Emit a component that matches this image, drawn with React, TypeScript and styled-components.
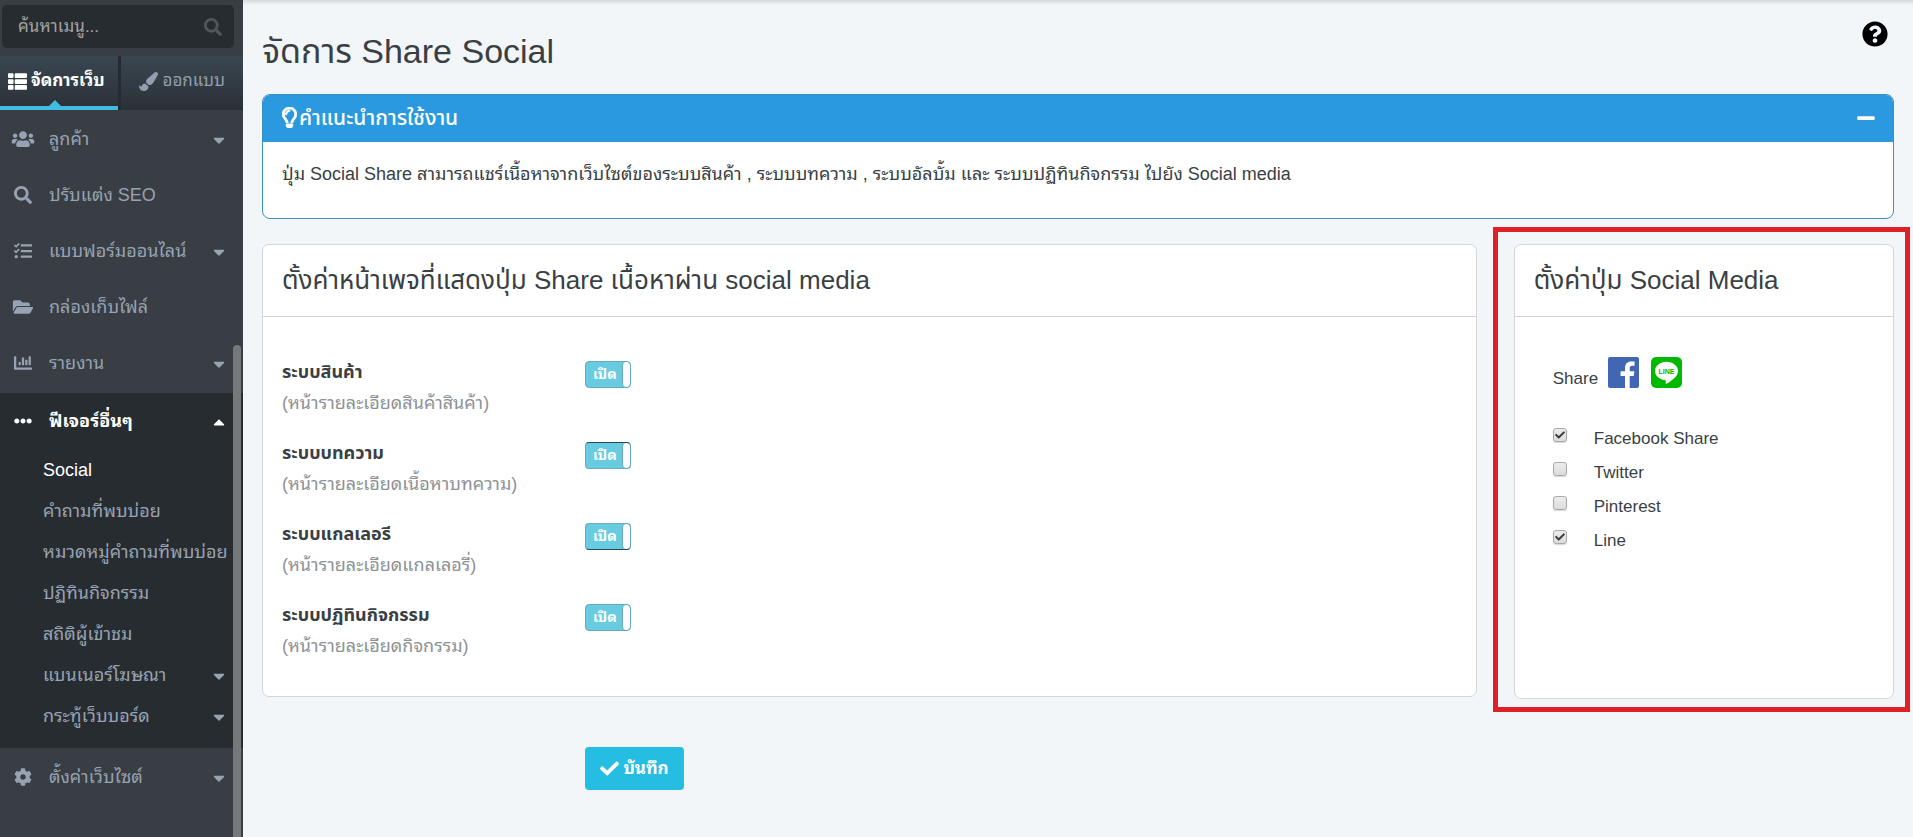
import React, { useState } from 'react';
import styled, { createGlobalStyle } from 'styled-components';
import {
  FaCaretDown,
  FaCaretUp,
  FaChartBar,
  FaCheck,
  FaCog,
  FaEllipsisH,
  FaFolderOpen,
  FaMinus,
  FaPaintBrush,
  FaQuestionCircle,
  FaRegLightbulb,
  FaSearch,
  FaTasks,
  FaThList,
  FaUsers,
} from 'react-icons/fa';

const headingFont = '"Liberation Sans", Arial, "Noto Sans Thai", "Noto Sans", sans-serif';

const GlobalStyle = createGlobalStyle`
  *, *::before, *::after { box-sizing: border-box; }
  html, body, #root { height: 100%; }
  body {
    margin: 0;
    background: #f2f6f9;
    color: #3a3f44;
    font: 17px/24px "Liberation Sans", Arial, "Noto Sans Thai Looped", "Noto Looped Thai", Loma, Waree, Garuda, "Noto Sans Thai", sans-serif;
    overflow: hidden;
  }
  button, input { font: inherit; }
  h1, h2, p, ul { margin: 0; padding: 0; font-weight: 400; }
  h1, h2 { font-family: ${headingFont}; }
  li { list-style: none; }
`;

const Page = styled.div`
  display: flex;
  min-height: 100%;
`;

/* ---- sidebar ---- */

const Sidebar = styled.aside`
  position: relative;
  flex: none;
  width: 243px;
  background: #383e44;
`;

const SearchBox = styled.form`
  display: flex;
  align-items: center;
  height: 43px;
  margin: 5px 9px 8px 2px;
  padding: 0 12px 0 16px;
  border-radius: 5px;
  background: #272c31;
  color: #4f565e;
`;

const SearchInput = styled.input`
  flex: 1;
  min-width: 0;
  padding: 0;
  border: 0;
  outline: 0;
  background: transparent;
  color: #fff;
  font-size: 17px;
  &::placeholder {
    color: #a3a3a3;
    opacity: 1;
  }
`;

const IconButton = styled.button`
  display: flex;
  padding: 0;
  border: 0;
  background: none;
  color: inherit;
  font-size: 18px;
`;

const Tabs = styled.div`
  display: grid;
  grid-template-columns: 118px 1fr;
  gap: 3px;
  height: 54px;
  background: #252b32;
`;

const Tab = styled.button<{ $active?: boolean }>`
  position: relative;
  display: flex;
  align-items: center;
  justify-content: ${(p) => (p.$active ? 'flex-start' : 'flex-end')};
  gap: 4px;
  padding: ${(p) => (p.$active ? '0 0 4px 8px' : '0 18px 4px 0')};
  border: 0;
  background: linear-gradient(#3a4650, #2a3037);
  color: ${(p) => (p.$active ? '#fff' : '#929dad')};
  font-size: 17px;
  font-weight: ${(p) => (p.$active ? 700 : 400)};
  white-space: nowrap;
  box-shadow: ${(p) => (p.$active ? 'inset 0 -4px #3fbce0' : 'none')};
  svg {
    flex: none;
    font-size: 19px;
  }
`;

const TabPointer = styled.span`
  position: absolute;
  left: 49px;
  bottom: 4px;
  border: 6px solid transparent;
  border-top: 0;
  border-bottom-color: #3fbce0;
`;

const NavGroup = styled.ul<{ $dark?: boolean }>`
  padding: ${(p) => (p.$dark ? '0 0 12px' : '1px 0 2px')};
  background: ${(p) => (p.$dark ? '#272c31' : 'transparent')};
`;

const NavLink = styled.a<{ $active?: boolean }>`
  display: flex;
  align-items: center;
  height: 56px;
  padding: 0 15px 0 11px;
  color: ${(p) => (p.$active ? '#fff' : '#97a2b2')};
  font-size: 18px;
  font-weight: ${(p) => (p.$active ? 700 : 400)};
  text-decoration: none;
  white-space: nowrap;
`;

const SubLink = styled(NavLink)`
  height: 41px;
  padding-left: 43px;
  font-weight: 400;
`;

const NavIcon = styled.span`
  display: flex;
  margin-right: 14px;
  svg {
    width: 24px;
    height: 18px;
  }
`;

const NavText = styled.span`
  flex: 1;
`;

const Caret = styled.span`
  display: flex;
  padding-top: 2px;
  font-size: 18px;
`;

const ScrollThumb = styled.div`
  position: absolute;
  top: 345px;
  right: 2px;
  bottom: 0;
  width: 8px;
  border-radius: 4px 4px 0 0;
  background: #75797c;
`;

/* ---- content ---- */

const Main = styled.main`
  flex: 1;
  min-width: 0;
  padding: 0 19px;
  box-shadow: inset 0 6px 4px -4px #d0d4d8;
`;

const TitleBar = styled.header`
  display: flex;
  align-items: flex-start;
  justify-content: space-between;
  height: 94px;
  padding: 21px 6px 0 0;
`;

const PageTitle = styled.h1`
  padding-top: 10px;
  font-size: 34px;
  line-height: 40px;
`;

const HelpButton = styled(IconButton)`
  color: #000;
  font-size: 26px;
`;

const Guide = styled.section`
  height: 125px;
  border: 1px solid #3d8fc4;
  border-radius: 8px;
  background: #fff;
  overflow: hidden;
`;

const GuideHead = styled.div`
  display: flex;
  align-items: center;
  gap: 2px;
  height: 47px;
  padding: 0 17px 2px 19px;
  background: #2a99df;
  color: #fff;
  h2 {
    flex: 1;
    font-size: 21px;
    font-weight: 500;
  }
`;

const BulbIcon = styled(FaRegLightbulb)`
  width: 15px;
  height: 21px;
  stroke: currentColor;
  stroke-width: 24;
`;

const GuideText = styled.p`
  padding: 20px 19px;
  font-size: 18px;
`;

const Columns = styled.div`
  display: grid;
  grid-template-columns: repeat(12, minmax(0, 1fr));
  align-items: start;
  gap: 37px;
  margin-top: 25px;
`;

const Card = styled.section<{ $span: number; $marked?: boolean }>`
  position: relative;
  grid-column: span ${(p) => p.$span};
  min-height: ${(p) => (p.$marked ? 455 : 453)}px;
  border: 1px solid #d3d6da;
  border-radius: 7px;
  background: #fff;
  &::after {
    content: ${(p) => (p.$marked ? '""' : 'none')};
    position: absolute;
    inset: -18px -17px -14px -22px;
    border: 5px solid #df2029;
    pointer-events: none;
  }
`;

const CardTitle = styled.h2`
  height: 72px;
  padding: 17px 19px 0;
  border-bottom: 1px solid #d3d6da;
  font-size: 26px;
  line-height: 36px;
  white-space: nowrap;
`;

const Settings = styled.div`
  display: grid;
  gap: 17px;
  padding: 41px 19px 30px;
`;

const SettingRow = styled.div`
  display: grid;
  grid-template-columns: 303px 1fr;
  height: 64px;
`;

const SettingName = styled.p`
  font-family: ${headingFont};
  font-size: 18px;
  font-weight: 700;
  line-height: 28px;
`;

const SettingHint = styled.p`
  color: #8d9297;
  font-size: 18px;
  line-height: 34px;
`;

const Toggle = styled.label<{ $edge?: 'top' | 'bottom' }>`
  display: flex;
  justify-content: space-between;
  width: 46px;
  height: 27px;
  margin-top: 3px;
  padding-left: 7px;
  border: 1px solid #69a9b8;
  ${(p) => p.$edge && `border-${p.$edge}-color: #244c57;`}
  border-radius: 4px;
  background: #68cbe2;
  color: #fff;
  font-size: 14px;
  font-weight: 700;
  line-height: 25px;
  overflow: hidden;
  input {
    flex: none;
    appearance: none;
    width: 8px;
    height: 25px;
    margin: 0;
    border-left: 1px solid #69a9b8;
    border-radius: 4px;
    background: #fff;
  }
`;

const SaveButton = styled.button`
  display: flex;
  align-items: center;
  justify-content: center;
  gap: 4px;
  width: 99px;
  height: 43px;
  margin: 48px 0 0 323px;
  padding: 0;
  border: 0;
  border-radius: 4px;
  background: #25bde2;
  color: #fff;
  font-size: 17px;
  font-weight: 700;
  svg {
    font-size: 19px;
  }
`;

const ShareLine = styled.div`
  display: flex;
  align-items: flex-start;
  padding: 40px 38px 0;
  span {
    width: 55px;
    padding-top: 10px;
  }
  svg {
    margin-right: 12px;
  }
`;

const Options = styled.ul`
  padding: 31px 38px 0;
`;

const Option = styled.label`
  display: flex;
  align-items: flex-start;
  gap: 27px;
  height: 34px;
`;

const OptionBox = styled.input`
  appearance: none;
  flex: none;
  width: 14px;
  height: 14px;
  margin: 6px 0 0;
  border: 1px solid #a9a9a9;
  border-radius: 3px;
  background: linear-gradient(#ececec, #dcdcdc);
  box-shadow: 0 1px 1px #d8d8d8;
`;

const OptionMark = styled.span`
  position: relative;
  display: flex;
  svg {
    position: absolute;
    left: 2px;
    top: 8px;
    color: #3a3a3a;
    font-size: 10px;
    pointer-events: none;
  }
`;

const OptionText = styled.span`
  padding-top: 5px;
`;

const menu = [
  { icon: <FaUsers />, text: 'ลูกค้า', more: true },
  { icon: <FaSearch />, text: 'ปรับแต่ง SEO' },
  { icon: <FaTasks />, text: 'แบบฟอร์มออนไลน์', more: true },
  { icon: <FaFolderOpen />, text: 'กล่องเก็บไฟล์' },
  { icon: <FaChartBar />, text: 'รายงาน', more: true },
];

const features = [
  { text: 'Social', active: true },
  { text: 'คำถามที่พบบ่อย' },
  { text: 'หมวดหมู่คำถามที่พบบ่อย' },
  { text: 'ปฏิทินกิจกรรม' },
  { text: 'สถิติผู้เข้าชม' },
  { text: 'แบนเนอร์โฆษณา', more: true },
  { text: 'กระทู้เว็บบอร์ด', more: true },
];

const settings: { name: string; hint: string; edge?: 'top' | 'bottom' }[] = [
  { name: 'ระบบสินค้า', hint: '(หน้ารายละเอียดสินค้าสินค้า)' },
  { name: 'ระบบบทความ', hint: '(หน้ารายละเอียดเนื้อหาบทความ)', edge: 'top' },
  { name: 'ระบบแกลเลอรี', hint: '(หน้ารายละเอียดแกลเลอรี่)', edge: 'bottom' },
  { name: 'ระบบปฏิทินกิจกรรม', hint: '(หน้ารายละเอียดกิจกรรม)' },
];

const FacebookLogo = () => (
  <svg width="31" height="31" viewBox="0 0 31 31" role="img" aria-label="Facebook">
    <rect width="31" height="31" rx="2" fill="#4267b2" />
    <path
      fill="#fff"
      d="M17 31V19h-4.400v-4.700H17v-3.500C17 6.600 19.600 4.400 23.300 4.400c1.300 0 2.500.1 3.200.2v4.200H24c-1.900 0-2.300 1-2.300 2.400v3.100h4.700l-.7 4.700h-4v12z"
    />
  </svg>
);

const LineLogo = () => (
  <svg width="31" height="31" viewBox="0 0 31 31" role="img" aria-label="Line">
    <rect width="31" height="31" rx="5" fill="#00b900" />
    <path
      fill="#fff"
      d="M15.500 4.800C9.200 4.800 4 8.900 4 14c0 4.600 4.100 8.400 9.600 9.100 1.500.3 1.300.9 1 3.200-.1.600.4.7.9.400 2-1.200 6.500-3.900 9-6.800C26.200 18.100 27 16.200 27 14c0-5.100-5.200-9.200-11.500-9.200z"
    />
    <text x="15.500" y="16.500" textAnchor="middle" fill="#00b900" fontSize="7" fontWeight="700">
      LINE
    </text>
  </svg>
);

export default function App() {
  const [shares, setShares] = useState<Record<string, boolean>>({
    'Facebook Share': true,
    Twitter: false,
    Pinterest: false,
    Line: true,
  });

  return (
    <Page>
      <GlobalStyle />
      <Sidebar>
        <SearchBox>
          <SearchInput aria-label="ค้นหาเมนู" placeholder="ค้นหาเมนู..." />
          <IconButton type="button" aria-label="ค้นหา">
            <FaSearch />
          </IconButton>
        </SearchBox>
        <Tabs>
          <Tab $active>
            <FaThList />
            จัดการเว็บ
            <TabPointer />
          </Tab>
          <Tab>
            <FaPaintBrush />
            ออกแบบ
          </Tab>
        </Tabs>
        <nav>
          <NavGroup>
            {menu.map((m) => (
              <li key={m.text}>
                <NavLink href="#">
                  <NavIcon>{m.icon}</NavIcon>
                  <NavText>{m.text}</NavText>
                  {m.more && <Caret><FaCaretDown /></Caret>}
                </NavLink>
              </li>
            ))}
          </NavGroup>
          <NavGroup $dark>
            <li>
              <NavLink href="#" $active>
                <NavIcon><FaEllipsisH /></NavIcon>
                <NavText>ฟีเจอร์อื่นๆ</NavText>
                <Caret><FaCaretUp /></Caret>
              </NavLink>
            </li>
            {features.map((f) => (
              <li key={f.text}>
                <SubLink href="#" $active={f.active}>
                  <NavText>{f.text}</NavText>
                  {f.more && <Caret><FaCaretDown /></Caret>}
                </SubLink>
              </li>
            ))}
          </NavGroup>
          <NavGroup>
            <li>
              <NavLink href="#">
                <NavIcon><FaCog /></NavIcon>
                <NavText>ตั้งค่าเว็บไซต์</NavText>
                <Caret><FaCaretDown /></Caret>
              </NavLink>
            </li>
          </NavGroup>
        </nav>
        <ScrollThumb />
      </Sidebar>

      <Main>
        <TitleBar>
          <PageTitle>จัดการ Share Social</PageTitle>
          <HelpButton aria-label="ช่วยเหลือ">
            <FaQuestionCircle />
          </HelpButton>
        </TitleBar>

        <Guide>
          <GuideHead>
            <BulbIcon />
            <h2>คำแนะนำการใช้งาน</h2>
            <IconButton aria-label="ย่อ">
              <FaMinus size={20} />
            </IconButton>
          </GuideHead>
          <GuideText>
            ปุ่ม Social Share สามารถแชร์เนื้อหาจากเว็บไซต์ของระบบสินค้า , ระบบบทความ , ระบบอัลบั้ม และ ระบบปฏิทินกิจกรรม ไปยัง Social media
          </GuideText>
        </Guide>

        <Columns>
          <Card $span={9}>
            <CardTitle>ตั้งค่าหน้าเพจที่แสดงปุ่ม Share เนื้อหาผ่าน social media</CardTitle>
            <Settings>
              {settings.map((s) => (
                <SettingRow key={s.name}>
                  <div>
                    <SettingName>{s.name}</SettingName>
                    <SettingHint>{s.hint}</SettingHint>
                  </div>
                  <Toggle $edge={s.edge}>
                    เปิด
                    <input type="checkbox" defaultChecked aria-label={s.name} />
                  </Toggle>
                </SettingRow>
              ))}
            </Settings>
          </Card>
          <Card $span={3} $marked>
            <CardTitle>ตั้งค่าปุ่ม Social Media</CardTitle>
            <ShareLine>
              <span>Share</span>
              <FacebookLogo />
              <LineLogo />
            </ShareLine>
            <Options>
              {Object.keys(shares).map((name) => (
                <li key={name}>
                  <Option>
                    <OptionMark>
                      <OptionBox
                        type="checkbox"
                        checked={shares[name]}
                        onChange={(e) => setShares({ ...shares, [name]: e.target.checked })}
                      />
                      {shares[name] && <FaCheck />}
                    </OptionMark>
                    <OptionText>{name}</OptionText>
                  </Option>
                </li>
              ))}
            </Options>
          </Card>
        </Columns>

        <SaveButton type="submit">
          <FaCheck />
          บันทึก
        </SaveButton>
      </Main>
    </Page>
  );
}
